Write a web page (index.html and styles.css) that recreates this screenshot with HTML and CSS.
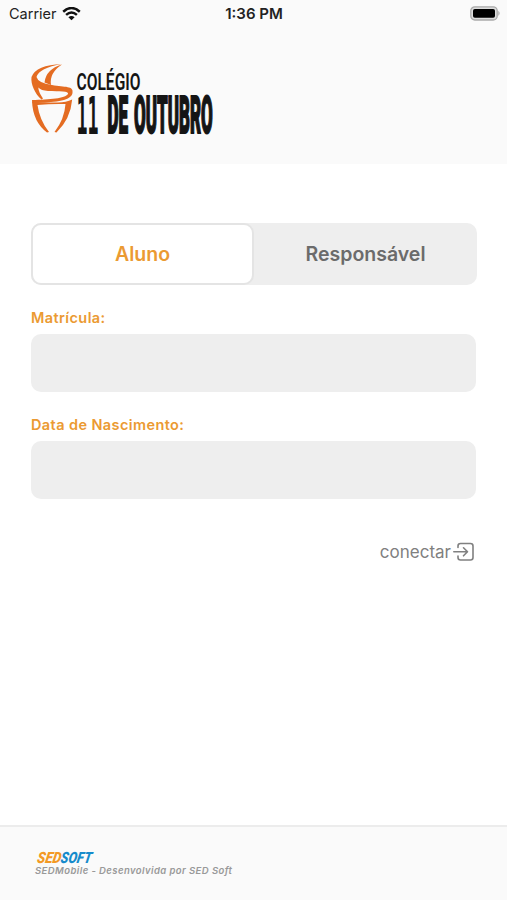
FILE: index.html
```html
<!DOCTYPE html>
<html lang="pt-BR">
<head>
<meta charset="utf-8">
<title>Colégio 11 de Outubro</title>
<link rel="stylesheet" href="styles.css">
</head>
<body>
<div class="app">
  <header class="header">
    <div class="status">
      <div class="carrier"><span>Carrier</span>
        <svg width="19" height="14" viewBox="0 0 19 14"><g fill="none" stroke="#111" stroke-width="2.5"><path d="M1.200 4.700Q9.500-2.600 17.800 4.700"/><path d="M4.100 7.900Q9.500 3.100 14.900 7.900"/></g><path d="M6.400 10.200Q9.500 7.600 12.600 10.200L9.500 13.300Z" fill="#111"/></svg>
      </div>
      <div class="time">1:36 PM</div>
      <svg class="battery" width="31" height="15" viewBox="0 0 31 15"><rect x=".8" y=".8" width="26.400" height="13.200" rx="4" fill="#ddd" stroke="#aaa" stroke-width="1.300"/><path d="M28.300 4.800Q31 7.300 28.300 9.900Z" fill="#aaa"/><rect x="3" y="3" width="22" height="8.800" rx="1.800" fill="#000"/></svg>
    </div>
    <svg class="logo" width="186" height="78" viewBox="30 60 186 78">
      <g fill="#e46c22">
        <path d="M62 64Q36 65 31.500 77C30.500 84 35 94 41.500 99.500L43 98.500Q38.500 92 38.300 87.500Q41 90.500 48 91C60 91.500 69 91 68 94C65 98.500 50 99.500 32 100L32.200 102.500C53 103 71.500 101 72.500 93C74 85.500 65 87.500 52 85Q38 83 36.500 77Q39 68 62 64Z"/>
        <path d="M62 64.500Q46 69 44.500 82.500L51 85Q49 73 62 64.500Z"/>
        <path d="M32 101.500Q33 122 47 132.500L49 132Q39.500 120 37.500 105Q52 103.500 65.500 104Q64.500 119 54.500 132L56.500 132.500Q70.500 119 72.200 99.500Q66 102.500 58 102.500Q42 102.500 32 101.500Z"/>
      </g>
      <g class="logo-text">
        <text class="school" transform="translate(76.500 90) scale(.64 1)" textLength="100" lengthAdjust="spacingAndGlyphs">COLÉGIO</text>
        <text class="slab" transform="translate(76.500 133.500) scale(.38 1)" textLength="58" lengthAdjust="spacingAndGlyphs">11</text>
        <text class="heavy" transform="translate(107.500 133) scale(.35 1)" textLength="59" lengthAdjust="spacingAndGlyphs">DE</text>
        <text class="heavy" transform="translate(134 133) scale(.35 1)" textLength="225" lengthAdjust="spacingAndGlyphs">OUTUBRO</text>
      </g>
    </svg>
  </header>
  <main class="main">
    <div class="tabs"><button class="tab active">Aluno</button><button class="tab">Responsável</button></div>
    <label class="label" for="mat">Matrícula:</label>
    <input class="field" id="mat">
    <label class="label" for="nasc">Data de Nascimento:</label>
    <input class="field" id="nasc">
    <div class="connect"><span>conectar</span>
      <svg width="22" height="20" viewBox="0 0 22 20" fill="none" stroke="#808080" stroke-width="1.600" stroke-linecap="round" stroke-linejoin="round"><path d="M5 5.500V4Q5 1.500 7.500 1.500H17.500Q20 1.500 20 4V15.500Q20 18 17.500 18H7.500Q5 18 5 15.500V14M0.800 9.800H14M10.500 5.800L14.500 9.800L10.500 13.800"/></svg>
    </div>
  </main>
  <footer class="footer">
    <svg class="sed" width="60" height="14" viewBox="0 0 60 14"><g class="sed-text"><text transform="translate(1.500 12.500) skewX(-10)" fill="#f39a25" textLength="24" lengthAdjust="spacingAndGlyphs">SED</text><text transform="translate(25 12.500) skewX(-10)" fill="#168bcb" textLength="31" lengthAdjust="spacingAndGlyphs">SOFT</text></g></svg>
    <div class="credit">SEDMobile - Desenvolvida por SED Soft</div>
  </footer>
</div>
</body>
</html>
```
FILE: styles.css
```css
* { box-sizing: border-box; }
body { margin: 0; background: #fff; font-family: Inter, "Liberation Sans", sans-serif; }
svg { display: block; flex: none; }
.app { height: 900px; display: flex; flex-direction: column; }
.header { height: 164px; background: #fafafa; }
.status { height: 28px; padding: 0 6px 0 9px; display: grid; grid-template-columns: 1fr auto 1fr; align-items: center; color: #222; font-size: 14.5px; }
.carrier { display: flex; align-items: center; gap: 5px; padding-bottom: 1px; }
.time { font-weight: 600; font-size: 15px; margin: -2px 0 0 -2px; }
.battery { justify-self: end; margin-bottom: 1px; }
.logo { margin: 32px 0 0 30px; overflow: visible; }
.logo-text { font-family: Roboto, sans-serif; fill: #151515; }
.school { font-size: 23px; font-weight: 600; }
.heavy { font-size: 51.5px; font-weight: 900; stroke: #151515; stroke-width: 2; }
.slab { font-family: "DejaVu Sans Mono", monospace; font-size: 51px; font-weight: 700; }
.main { flex: 1; padding: 59px 30px 0 31px; display: flex; flex-direction: column; }
.tabs { height: 62px; display: flex; background: #eee; border-radius: 10px; }
.tab { width: 50%; border: 0; background: none; font: 600 19.5px Inter, sans-serif; color: #6b6b6b; padding: 0; }
.tab.active { background: #fff; color: #eb9a32; border: 2px solid #e4e4e4; border-radius: 10px; }
.label { height: 49px; padding-top: 23px; font-size: 14.5px; line-height: 20px; font-weight: 600; color: #eb9a32; letter-spacing: .4px; }
.field { width: 445px; height: 58px; border: 0; border-radius: 10px; background: #eee; padding: 0 14px; }
.connect { display: flex; justify-content: flex-end; align-items: center; gap: 2px; margin: 43px 2px 0 0; height: 20px; font-size: 17px; color: #808080; }
.footer { height: 75px; background: #fafafa; border-top: 2px solid #ececec; padding: 23px 35px 0; }
.sed { overflow: visible; }
.sed-text { font: italic 900 15.500px Roboto, sans-serif; }
.credit { margin-top: 0; font-size: 9.5px; line-height: 13px; font-style: italic; font-weight: 600; color: #999; letter-spacing: .42px; }
```
